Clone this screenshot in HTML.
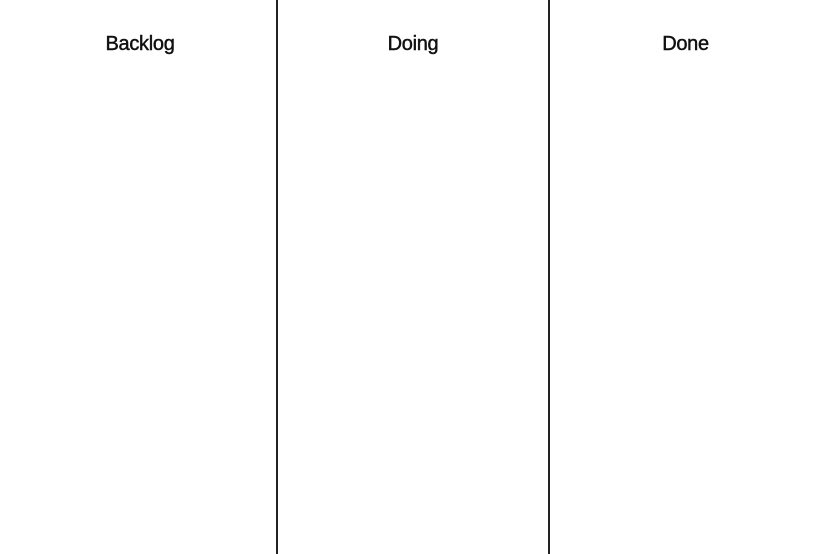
<!DOCTYPE html>
<html><head><style>
html,body{margin:0;padding:0;background:#fff;width:821px;height:554px;overflow:hidden}
.col{position:absolute;top:0;height:554px;text-align:center;font-family:"Liberation Sans",sans-serif;font-size:20px;color:#111;letter-spacing:-0.3px;-webkit-text-stroke:0.45px #111}
.col span{position:absolute;left:0;right:0;top:33px}
.line{position:absolute;top:0;width:2px;height:554px;background:#222}
</style></head><body>
<div class="col" style="left:0;width:276px"><span style="left:4px">Backlog</span></div>
<div class="line" style="left:276px"></div>
<div class="col" style="left:278px;width:270px"><span>Doing</span></div>
<div class="line" style="left:548px"></div>
<div class="col" style="left:550px;width:271px"><span>Done</span></div>
</body></html>
